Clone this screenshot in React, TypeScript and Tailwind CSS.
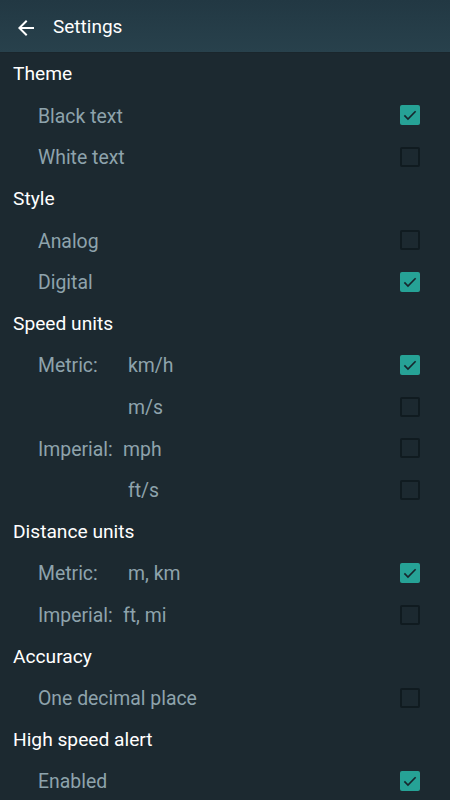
import React from 'react';

type Row =
  | { kind: 'head'; label: string }
  | { kind: 'item'; label: string; checked: boolean }
  | { kind: 'unit'; prefix?: string; value: string; checked: boolean; pad: string };

const rows: Row[] = [
  { kind: 'head', label: 'Theme' },
  { kind: 'item', label: 'Black text', checked: true },
  { kind: 'item', label: 'White text', checked: false },
  { kind: 'head', label: 'Style' },
  { kind: 'item', label: 'Analog', checked: false },
  { kind: 'item', label: 'Digital', checked: true },
  { kind: 'head', label: 'Speed units' },
  { kind: 'unit', prefix: 'Metric:', value: 'km/h', checked: true, pad: 'w-[90px]' },
  { kind: 'unit', value: 'm/s', checked: false, pad: 'w-[90px]' },
  { kind: 'unit', prefix: 'Imperial:', value: 'mph', checked: false, pad: 'w-[85px]' },
  { kind: 'unit', value: 'ft/s', checked: false, pad: 'w-[90px]' },
  { kind: 'head', label: 'Distance units' },
  { kind: 'unit', prefix: 'Metric:', value: 'm, km', checked: true, pad: 'w-[90px]' },
  { kind: 'unit', prefix: 'Imperial:', value: 'ft, mi', checked: false, pad: 'w-[85px]' },
  { kind: 'head', label: 'Accuracy' },
  { kind: 'item', label: 'One decimal place', checked: false },
  { kind: 'head', label: 'High speed alert' },
  { kind: 'item', label: 'Enabled', checked: true },
];

const Checkbox = ({ checked }: { checked: boolean }) =>
  checked ? (
    <div className="w-[20px] h-[20px] rounded-[2px] bg-[#26a296] flex items-center justify-center">
      <svg width="18" height="18" viewBox="0 0 24 24">
        <path d="M4.5 12.5l4.8 4.8L19.5 7" fill="none" stroke="#17262d" strokeWidth="2.2" />
      </svg>
    </div>
  ) : (
    <div className="w-[20px] h-[20px] rounded-[2px] border-2 border-[#101b20]" />
  );

export default function App() {
  return (
    <div className="w-[450px] h-[800px] overflow-hidden bg-[#1c2930] font-['Roboto',sans-serif]">
      {/* Toolbar */}
      <header className="h-[53px] bg-gradient-to-b from-[#223843] to-[#28414c] flex items-center pl-[14px] pt-[3px] border-b border-[#1a262c]">
        <svg width="24" height="24" viewBox="0 0 24 24" fill="#ffffff">
          <path d="M20 11H7.83l5.59-5.59L12 4l-8 8 8 8 1.41-1.41L7.83 13H20v-2z" />
        </svg>
        <span className="ml-[15px] text-[19px] text-white">Settings</span>
      </header>

      <div className="flex flex-col">
        {rows.map((r, i) =>
          r.kind === 'head' ? (
            <div key={i} className="h-[41.6px] flex items-center pl-[13px] pt-[2px] text-[19.2px] text-white">
              {r.label}
            </div>
          ) : (
            <div key={i} className="h-[41.6px] flex items-center justify-between pl-[38px] pr-[30px] text-[19.4px] text-[#8ea3ac]">
              {r.kind === 'item' ? (
                <span className="pt-[2px]">{r.label}</span>
              ) : (
                <span className="flex pt-[2px]">
                  <span className={r.pad}>{r.prefix ?? ''}</span>
                  <span>{r.value}</span>
                </span>
              )}
              <Checkbox checked={r.checked} />
            </div>
          )
        )}
      </div>
    </div>
  );
}
